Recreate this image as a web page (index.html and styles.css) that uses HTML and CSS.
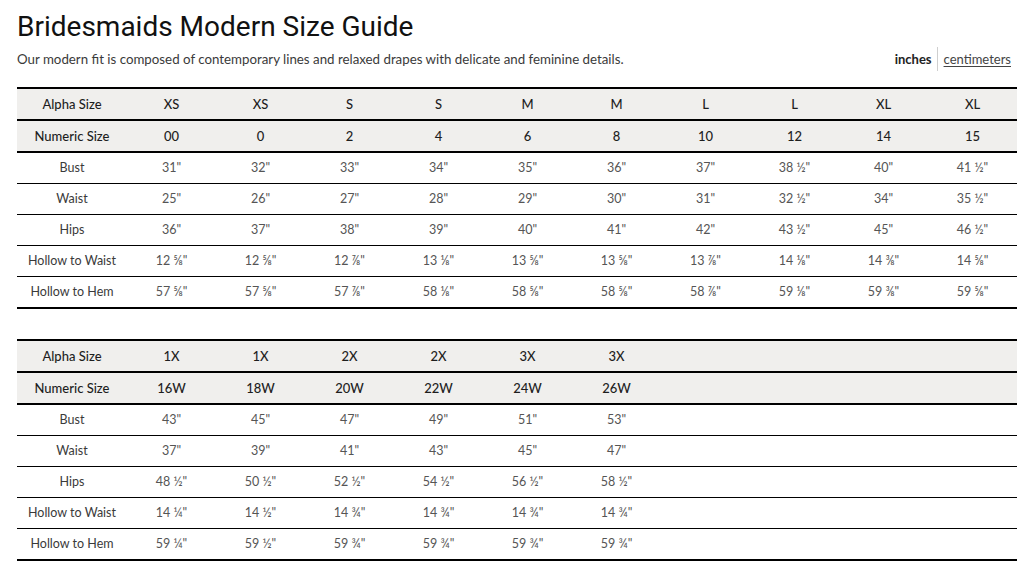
FILE: index.html
```html
<!DOCTYPE html>
<html lang="en">
<head>
<meta charset="utf-8">
<title>Bridesmaids Modern Size Guide</title>
<link rel="stylesheet" href="styles.css">
</head>
<body>
<div class="page">
  <h1 class="title">Bridesmaids Modern Size Guide</h1>
  <div class="intro">
    <p class="lead">Our modern fit is composed of contemporary lines and relaxed drapes with delicate and feminine details.</p>
    <div class="units">
      <span class="unit active">inches</span>
      <span class="sep"></span>
      <a class="unit link" href="#">centimeters</a>
    </div>
  </div>

  <table class="chart">
    <tbody>
      <tr class="head"><th>Alpha Size</th><td>XS</td><td>XS</td><td>S</td><td>S</td><td>M</td><td>M</td><td>L</td><td>L</td><td>XL</td><td>XL</td></tr>
      <tr class="head"><th>Numeric Size</th><td>00</td><td>0</td><td>2</td><td>4</td><td>6</td><td>8</td><td>10</td><td>12</td><td>14</td><td>15</td></tr>
      <tr><th>Bust</th><td>31"</td><td>32"</td><td>33"</td><td>34"</td><td>35"</td><td>36"</td><td>37"</td><td>38 ½"</td><td>40"</td><td>41 ½"</td></tr>
      <tr><th>Waist</th><td>25"</td><td>26"</td><td>27"</td><td>28"</td><td>29"</td><td>30"</td><td>31"</td><td>32 ½"</td><td>34"</td><td>35 ½"</td></tr>
      <tr><th>Hips</th><td>36"</td><td>37"</td><td>38"</td><td>39"</td><td>40"</td><td>41"</td><td>42"</td><td>43 ½"</td><td>45"</td><td>46 ½"</td></tr>
      <tr><th>Hollow to Waist</th><td>12 ⅝"</td><td>12 ⅝"</td><td>12 ⅞"</td><td>13 ⅛"</td><td>13 ⅝"</td><td>13 ⅝"</td><td>13 ⅞"</td><td>14 ⅛"</td><td>14 ⅜"</td><td>14 ⅝"</td></tr>
      <tr class="last"><th>Hollow to Hem</th><td>57 ⅝"</td><td>57 ⅝"</td><td>57 ⅞"</td><td>58 ⅛"</td><td>58 ⅝"</td><td>58 ⅝"</td><td>58 ⅞"</td><td>59 ⅛"</td><td>59 ⅜"</td><td>59 ⅝"</td></tr>
    </tbody>
  </table>

  <table class="chart">
    <tbody>
      <tr class="head"><th>Alpha Size</th><td>1X</td><td>1X</td><td>2X</td><td>2X</td><td>3X</td><td>3X</td><td></td><td></td><td></td><td></td></tr>
      <tr class="head"><th>Numeric Size</th><td>16W</td><td>18W</td><td>20W</td><td>22W</td><td>24W</td><td>26W</td><td></td><td></td><td></td><td></td></tr>
      <tr><th>Bust</th><td>43"</td><td>45"</td><td>47"</td><td>49"</td><td>51"</td><td>53"</td><td></td><td></td><td></td><td></td></tr>
      <tr><th>Waist</th><td>37"</td><td>39"</td><td>41"</td><td>43"</td><td>45"</td><td>47"</td><td></td><td></td><td></td><td></td></tr>
      <tr><th>Hips</th><td>48 ½"</td><td>50 ½"</td><td>52 ½"</td><td>54 ½"</td><td>56 ½"</td><td>58 ½"</td><td></td><td></td><td></td><td></td></tr>
      <tr><th>Hollow to Waist</th><td>14 ¼"</td><td>14 ½"</td><td>14 ¾"</td><td>14 ¾"</td><td>14 ¾"</td><td>14 ¾"</td><td></td><td></td><td></td><td></td></tr>
      <tr class="last"><th>Hollow to Hem</th><td>59 ¼"</td><td>59 ½"</td><td>59 ¾"</td><td>59 ¾"</td><td>59 ¾"</td><td>59 ¾"</td><td></td><td></td><td></td><td></td></tr>
    </tbody>
  </table>
</div>
</body>
</html>
```

FILE: styles.css
```css
* { box-sizing: border-box; }

html, body {
  margin: 0;
  padding: 0;
  background: #fff;
}

body {
  font-family: "Lato", "Noto Sans", "Liberation Sans", sans-serif;
  color: #333;
}

.page {
  padding: 10px 18px 0 17px;
}

.title {
  margin: 0;
  font-family: "Roboto", "Liberation Sans", sans-serif;
  font-weight: 400;
  font-size: 28px;
  line-height: 33px;
  color: #111;
}

.intro {
  display: flex;
  align-items: baseline;
  justify-content: space-between;
  margin-top: 4px;
  height: 40px;
}

.lead {
  margin: 0;
  font-size: 13.3px;
  line-height: 18px;
  color: #3a3a3a;
}

.units {
  display: flex;
  align-items: center;
  font-size: 13px;
  line-height: 18px;
  padding-right: 6px;
}

.unit.active {
  font-weight: 700;
  color: #222;
}

.sep {
  width: 1px;
  height: 24px;
  background: #cfcfcf;
  margin: 0 6px 0 5px;
  align-self: center;
}

.unit.link {
  color: #444;
  text-decoration: underline;
  text-underline-offset: 2px;
}

.chart {
  width: 1000px;
  border-collapse: collapse;
  table-layout: fixed;
  border-top: 2px solid #000;
  margin-bottom: 30px;
}

.chart th,
.chart td {
  height: 31px;
  padding: 0;
  text-align: center;
  vertical-align: middle;
  font-size: 12.5px;
  border-bottom: 1px solid #000;
}

.chart th {
  width: 110px;
  font-weight: 400;
  color: #3a3a3a;
}

.chart td {
  width: 89px;
  font-weight: 400;
  color: #555;
}

.chart tr.head th,
.chart tr.head td {
  background: #f0efed;
  height: 32px;
  border-bottom: 2px solid #000;
  font-weight: 500;
  font-size: 13px;
  color: #1e1e1e;
}

.chart tr.last th,
.chart tr.last td {
  height: 32px;
  border-bottom: 2px solid #000;
}
```
